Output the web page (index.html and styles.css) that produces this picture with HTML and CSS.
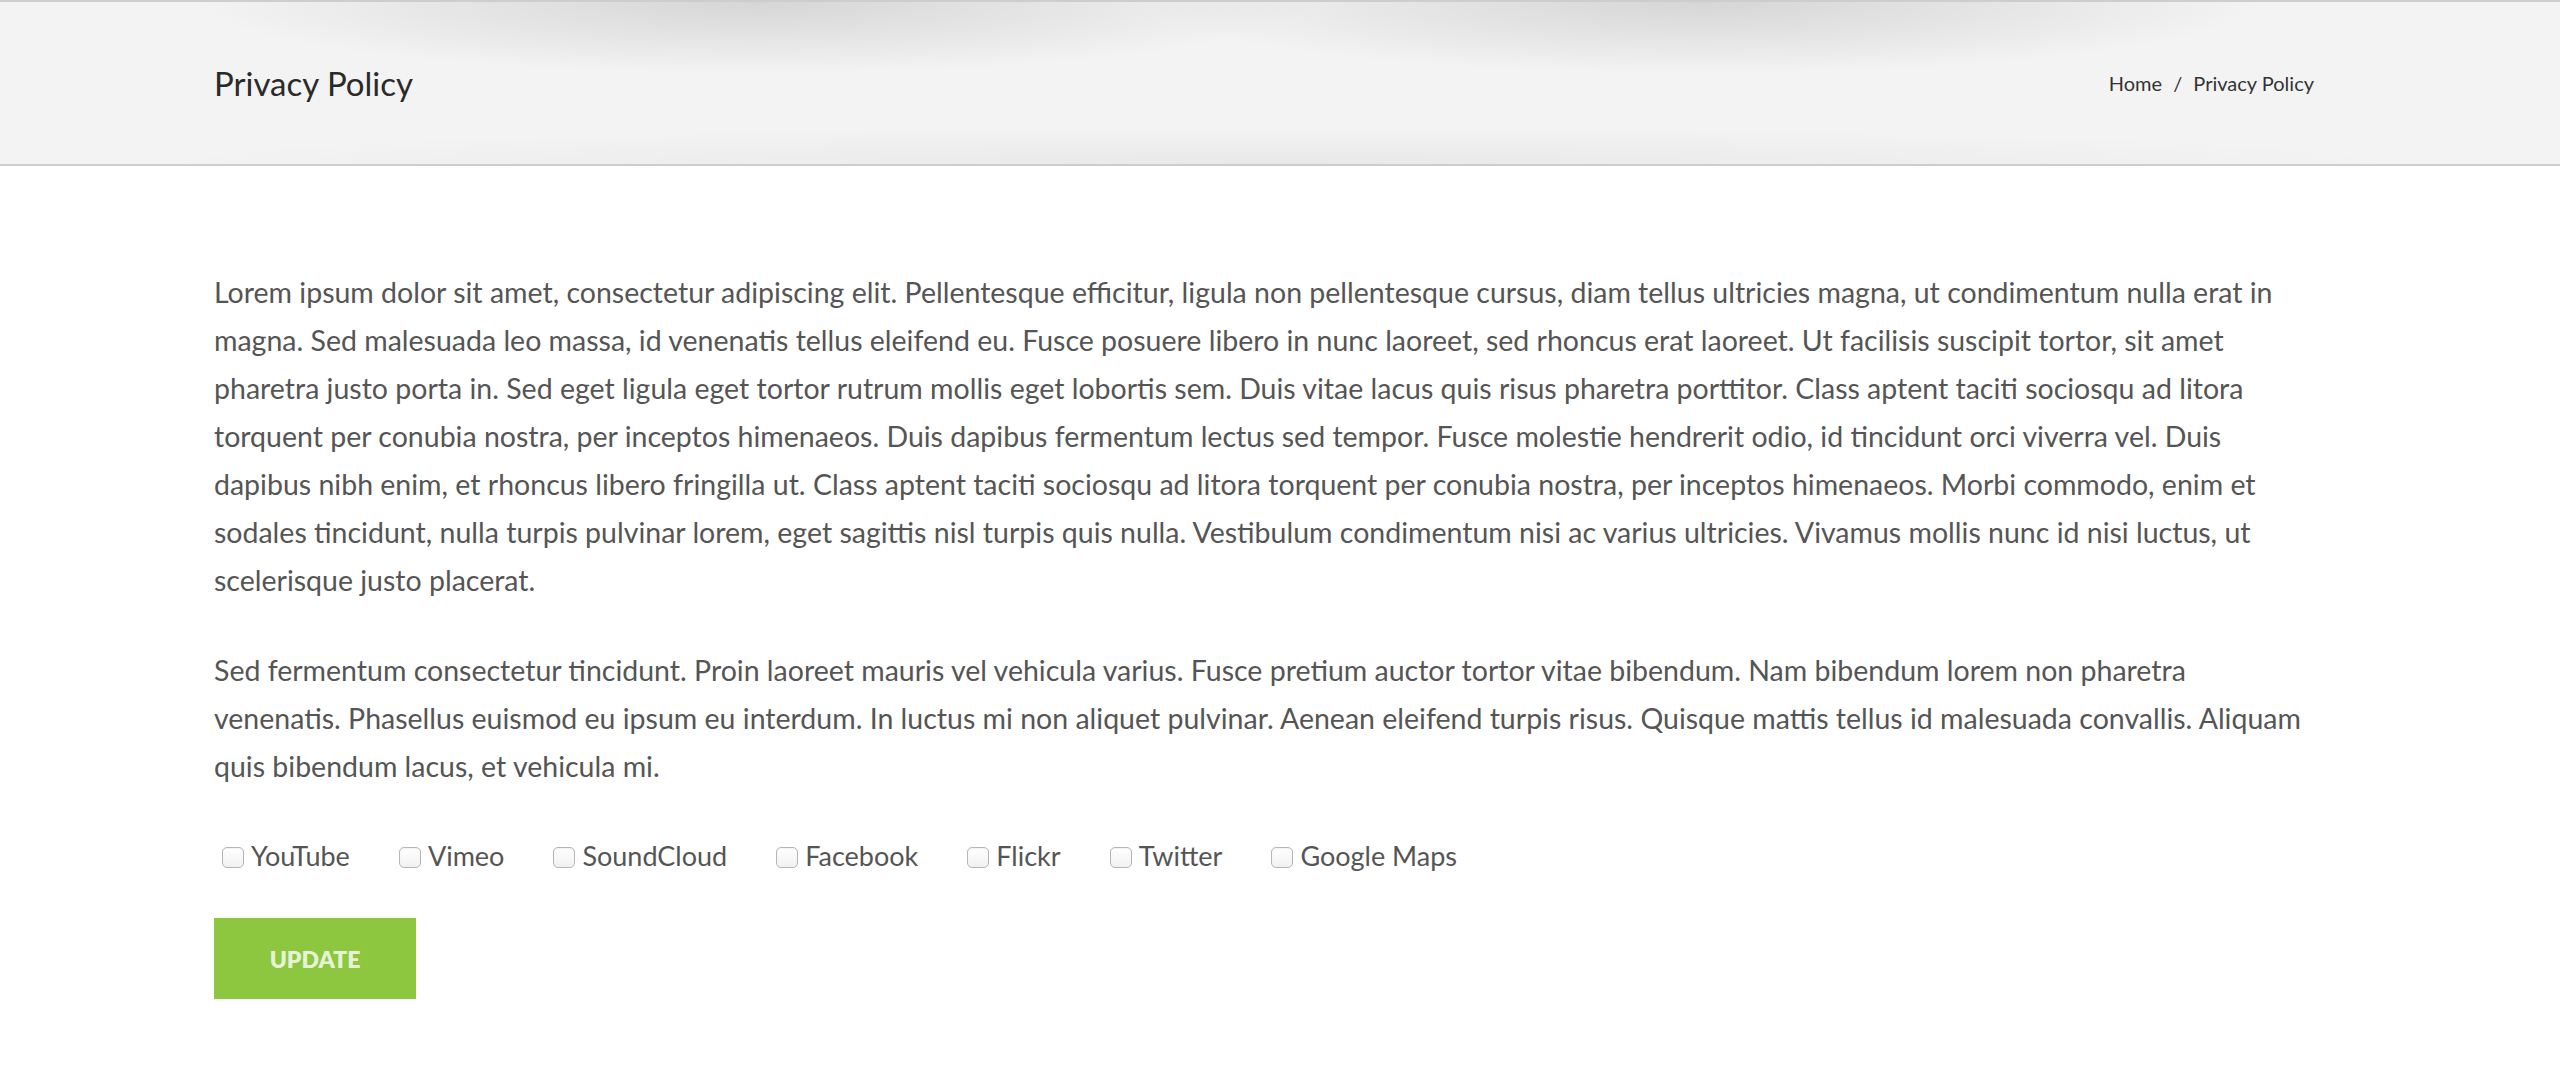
FILE: index.html
```html
<!DOCTYPE html>
<html lang="en">
<head>
    <meta charset="UTF-8">
    <meta name="viewport" content="width=device-width, initial-scale=1.0">
    <title>Privacy Policy</title>
    <link rel="stylesheet" href="styles.css">
</head>
<body>
    <div class="page-title">
        <div class="wrap title-row">
            <h1>Privacy Policy</h1>
            <div class="crumbs">
                <a href="#">Home</a>
                <span class="sep">/</span>
                <span>Privacy Policy</span>
            </div>
        </div>
    </div>

    <div class="wrap content">
        <p>Lorem ipsum dolor sit amet, consectetur adipiscing elit. Pellentesque efficitur, ligula non pellentesque cursus, diam tellus ultricies magna, ut condimentum nulla erat in magna. Sed malesuada leo massa, id venenatis tellus eleifend eu. Fusce posuere libero in nunc laoreet, sed rhoncus erat laoreet. Ut facilisis suscipit tortor, sit amet pharetra justo porta in. Sed eget ligula eget tortor rutrum mollis eget lobortis sem. Duis vitae lacus quis risus pharetra porttitor. Class aptent taciti sociosqu ad litora torquent per conubia nostra, per inceptos himenaeos. Duis dapibus fermentum lectus sed tempor. Fusce molestie hendrerit odio, id tincidunt orci viverra vel. Duis dapibus nibh enim, et rhoncus libero fringilla ut. Class aptent taciti sociosqu ad litora torquent per conubia nostra, per inceptos himenaeos. Morbi commodo, enim et sodales tincidunt, nulla turpis pulvinar lorem, eget sagittis nisl turpis quis nulla. Vestibulum condimentum nisi ac varius ultricies. Vivamus mollis nunc id nisi luctus, ut scelerisque justo placerat.</p>
        <p>Sed fermentum consectetur tincidunt. Proin laoreet mauris vel vehicula varius. Fusce pretium auctor tortor vitae bibendum. Nam bibendum lorem non pharetra venenatis. Phasellus euismod eu ipsum eu interdum. In luctus mi non aliquet pulvinar. Aenean eleifend turpis risus. Quisque mattis tellus id malesuada convallis. Aliquam quis bibendum lacus, et vehicula mi.</p>

        <form class="consent">
            <div class="services">
                <label><input type="checkbox" name="youtube">YouTube</label>
                <label><input type="checkbox" name="vimeo">Vimeo</label>
                <label><input type="checkbox" name="soundcloud">SoundCloud</label>
                <label><input type="checkbox" name="facebook">Facebook</label>
                <label><input type="checkbox" name="flickr">Flickr</label>
                <label><input type="checkbox" name="twitter">Twitter</label>
                <label><input type="checkbox" name="gmaps">Google Maps</label>
            </div>
            <button type="submit" class="btn-update">UPDATE</button>
        </form>
    </div>
</body>
</html>
```

FILE: styles.css
```css
body{
    margin:0;
    background:#fff;
    font-family: Lato, "Open Sans", sans-serif;
    color:#555;
}
.wrap{
    width:2100px;
    margin-left:214px;
}

/* title bar */
.page-title{
    height:162px;
    border-top:2px solid #cdcdcd;
    border-bottom:2px solid #cdcdcd;
    background-color:#f3f3f3;
    background-image:
        radial-gradient(ellipse 560px 72px at 29.5% 0, rgba(0,0,0,.12), rgba(0,0,0,0) 100%),
        radial-gradient(ellipse 560px 72px at 66.5% 0, rgba(0,0,0,.12), rgba(0,0,0,0) 100%),
        radial-gradient(ellipse 1150px 38px at 50% 100%, rgba(0,0,0,.045), rgba(0,0,0,0) 100%);
}
.title-row{
    height:100%;
    display:flex;
    align-items:center;
    justify-content:space-between;
}
.title-row h1{
    margin:0;
    font-size:33px;
    font-weight:400;
    color:#2a2a2a;
}
.crumbs{
    font-size:20px;
    color:#333;
}
.crumbs a{
    color:#333;
    text-decoration:none;
}
.crumbs .sep{
    margin:0 6px;
}

/* body */
.content{
    padding-top:102px;
    padding-bottom:80px;
}
.content p{
    margin:0 0 42px;
    font-size:28.5px;
    line-height:48px;
}
.services{
    display:flex;
    gap:41px;
    line-height:48px;
    font-size:27px;
    margin-bottom:38px;
}
.services label{
    display:flex;
    align-items:center;
    cursor:pointer;
}
.services input{
    -webkit-appearance:none;
    appearance:none;
    width:22px;
    height:21px;
    margin:2px 7px 0 8px;
    border:1px solid #b5b5b5;
    border-radius:5px;
    background:linear-gradient(#fff, #f1f1f1);
    box-shadow:inset 0 1px 1px rgba(0,0,0,.05);
}
.services input:checked{
    background:#8dc63f;
    border-color:#7bb12f;
}
.btn-update{
    width:202px;
    height:81px;
    border:0;
    background:#8dc63f;
    color:rgba(255,255,255,.8);
    font-family: Lato, sans-serif;
    font-weight:800;
    font-size:23px;
    cursor:pointer;
}
```
